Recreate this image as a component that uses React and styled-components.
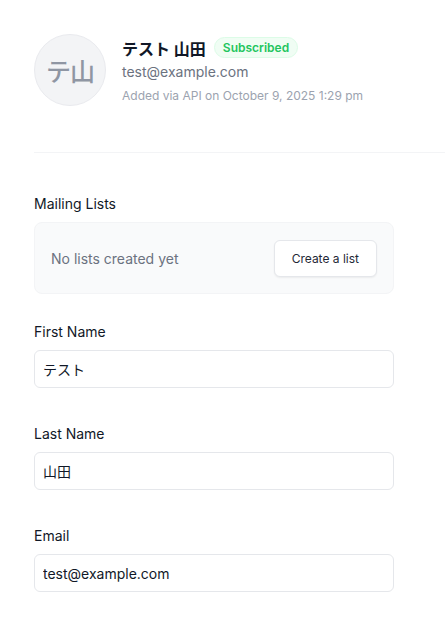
import styled, { createGlobalStyle } from 'styled-components';

const GlobalStyle = createGlobalStyle`
  html, body {
    margin: 0;
    padding: 0;
    background: #ffffff;
  }
  body {
    font-family: Inter, "Noto Sans CJK JP", sans-serif;
    color: #111827;
  }
  * { box-sizing: border-box; }
`;

const contact = {
  initials: 'テ山',
  firstName: 'テスト',
  lastName: '山田',
  email: 'test@example.com',
  added: 'Added via API on October 9, 2025 1:29 pm',
};

const App = () => {
  return (
    <Page>
      <GlobalStyle />
      <Header>
        <Avatar>{contact.initials}</Avatar>
        <Info>
          <NameRow>
            <Name>{contact.firstName} {contact.lastName}</Name>
            <Badge>Subscribed</Badge>
          </NameRow>
          <Mail>{contact.email}</Mail>
          <Meta>{contact.added}</Meta>
        </Info>
      </Header>
      <Divider />
      <Form>
        <Section>
          <Label>Mailing Lists</Label>
          <ListsBox>
            <Empty>No lists created yet</Empty>
            <Button>Create a list</Button>
          </ListsBox>
        </Section>
        <Field>
          <Label>First Name</Label>
          <Input defaultValue={contact.firstName} />
        </Field>
        <Field>
          <Label>Last Name</Label>
          <Input defaultValue={contact.lastName} />
        </Field>
        <Field>
          <Label>Email</Label>
          <Input defaultValue={contact.email} />
        </Field>
      </Form>
    </Page>
  );
};

const Page = styled.div`
  padding: 34px 0 0 34px;
  min-height: 100vh;
`;

const Header = styled.div`
  display: flex;
  align-items: flex-start;
  gap: 16px;
`;

const Avatar = styled.div`
  width: 72px;
  height: 72px;
  border-radius: 50%;
  background: #f3f4f6;
  border: 1px solid #e9eaee;
  color: #8f96a3;
  font-size: 25px;
  font-weight: 500;
  display: flex;
  align-items: center;
  justify-content: center;
  letter-spacing: -1px;
`;

const Info = styled.div`
  display: flex;
  flex-direction: column;
  padding-top: 3px;
`;

const NameRow = styled.div`
  display: flex;
  align-items: center;
  gap: 8px;
  height: 21px;
`;

const Name = styled.span`
  font-size: 16px;
  font-weight: 700;
  color: #111827;
`;

const Badge = styled.span`
  display: inline-flex;
  align-items: center;
  height: 21px;
  padding: 0 8px;
  border-radius: 999px;
  background: #f0fdf4;
  border: 1px solid #dcfce7;
  color: #22c55e;
  font-size: 12px;
  font-weight: 600;
`;

const Mail = styled.div`
  margin-top: 4px;
  font-size: 14px;
  line-height: 20px;
  color: #6b7280;
`;

const Meta = styled.div`
  margin-top: 6px;
  font-size: 12px;
  line-height: 16px;
  color: #9ca3af;
`;

const Divider = styled.div`
  height: 1px;
  background: #f3f4f6;
  margin-top: 46px;
`;

const Form = styled.div`
  width: 360px;
  padding-top: 41px;
  display: flex;
  flex-direction: column;
`;

const Section = styled.div`
  margin-bottom: 28px;
`;

const Field = styled.div`
  margin-bottom: 36px;
`;

const Label = styled.div`
  font-size: 14px;
  line-height: 20px;
  font-weight: 400;
  color: #111827;
  margin-bottom: 8px;
`;

const ListsBox = styled.div`
  height: 72px;
  background: #f9fafb;
  border: 1px solid #f3f4f6;
  border-radius: 8px;
  display: flex;
  align-items: center;
  justify-content: space-between;
  padding: 0 16px 0 16px;
`;

const Empty = styled.span`
  font-size: 14px;
  color: #6b7280;
`;

const Button = styled.button`
  height: 37px;
  padding: 0 17px;
  background: #ffffff;
  border: 1px solid #e5e7eb;
  border-radius: 6px;
  box-shadow: 0 1px 2px rgba(0, 0, 0, 0.06);
  font-family: Inter, sans-serif;
  font-size: 12px;
  font-weight: 400;
  color: #1f2937;
  cursor: pointer;
`;

const Input = styled.input`
  display: block;
  width: 100%;
  height: 38px;
  padding: 0 8px;
  border: 1px solid #e5e7eb;
  border-radius: 6px;
  background: #ffffff;
  font-family: Inter, "Noto Sans CJK JP", sans-serif;
  font-size: 14px;
  color: #111827;
  outline: none;
`;

export default App;
